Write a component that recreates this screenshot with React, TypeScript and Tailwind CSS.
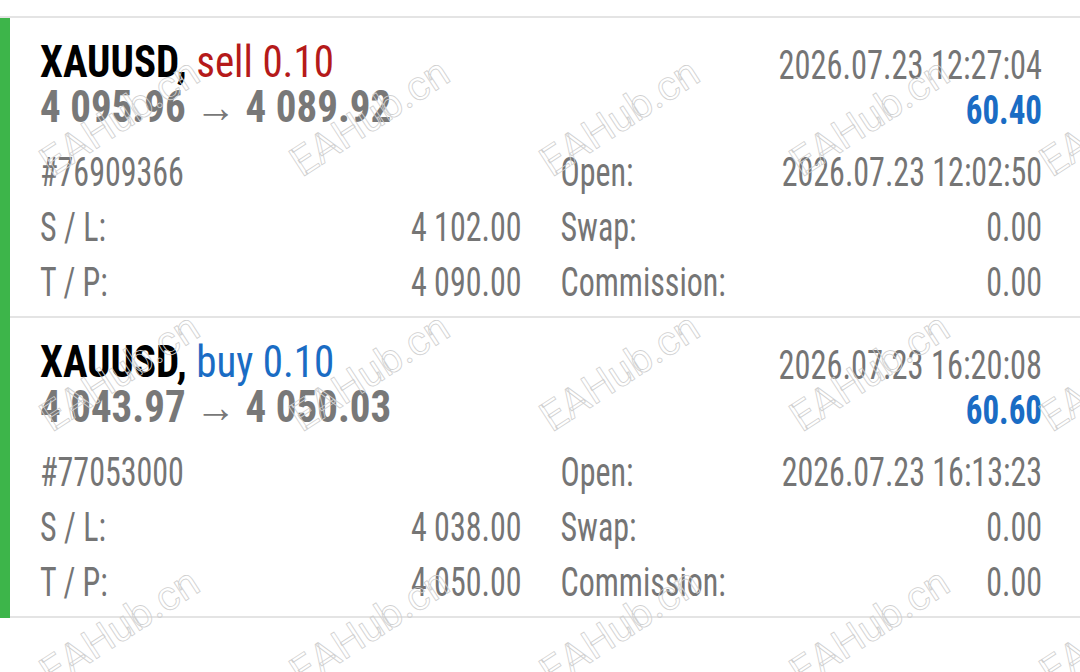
import React from "react";

type Trade = {
  symbol: string;
  side: "buy" | "sell";
  lots: string;
  openPrice: string;
  closePrice: string;
  closeTime: string;
  profit: string;
  ticket: string;
  openTime: string;
  sl: string;
  tp: string;
  swap: string;
  commission: string;
};

const trades: Trade[] = [
  {
    symbol: "XAUUSD",
    side: "sell",
    lots: "0.10",
    openPrice: "4 095.96",
    closePrice: "4 089.92",
    closeTime: "2026.07.23 12:27:04",
    profit: "60.40",
    ticket: "#76909366",
    openTime: "2026.07.23 12:02:50",
    sl: "4 102.00",
    tp: "4 090.00",
    swap: "0.00",
    commission: "0.00",
  },
  {
    symbol: "XAUUSD",
    side: "buy",
    lots: "0.10",
    openPrice: "4 043.97",
    closePrice: "4 050.03",
    closeTime: "2026.07.23 16:20:08",
    profit: "60.60",
    ticket: "#77053000",
    openTime: "2026.07.23 16:13:23",
    sl: "4 038.00",
    tp: "4 050.00",
    swap: "0.00",
    commission: "0.00",
  },
];

// Narrow, tall numerals like the terminal's condensed face
const tall = "scale-y-[1.25]";

function Field({ label, value }: { label: string; value: string }) {
  return (
    <div className="flex h-[55px] items-baseline justify-between leading-[55px]">
      <span className={tall}>{label}</span>
      <span className={tall}>{value}</span>
    </div>
  );
}

function TradeCard({ t }: { t: Trade }) {
  return (
    <div className="border-b-2 border-[#e4e4e4] pb-[6px] pl-[30px] pr-[38px] pt-[22px]">
      <div className="flex h-[45px] items-baseline justify-between leading-[45px]">
        <div className="scale-y-[1.1] text-[41px]">
          <span className="font-bold text-black">{t.symbol},</span>{" "}
          <span className={t.side === "sell" ? "text-[#b51a1a]" : "text-[#1a6cc4]"}>
            {t.side} {t.lots}
          </span>
        </div>
        <span className={`${tall} text-[32.4px] text-[#757575]`}>{t.closeTime}</span>
      </div>
      <div className="flex h-[45px] items-baseline justify-between leading-[45px]">
        <div className="scale-y-[1.07] text-[41px] font-bold text-[#787878]">
          {t.openPrice} <span className="font-normal">→</span> {t.closePrice}
        </div>
        <span className={`${tall} text-[33px] font-bold text-[#1a6cc4]`}>{t.profit}</span>
      </div>
      <div className="mt-[15px] grid grid-cols-2 gap-x-[39px] text-[32px] text-[#757575]">
        <div>
          <div className="flex h-[55px] items-baseline leading-[55px]">
            <span className={tall}>{t.ticket}</span>
          </div>
          <Field label="S / L:" value={t.sl} />
          <Field label="T / P:" value={t.tp} />
        </div>
        <div>
          <Field label="Open:" value={t.openTime} />
          <Field label="Swap:" value={t.swap} />
          <Field label="Commission:" value={t.commission} />
        </div>
      </div>
    </div>
  );
}

function Watermark() {
  const cells = Array.from({ length: 15 });
  return (
    <div className="pointer-events-none absolute left-[-5px] top-[-10px] grid auto-rows-[255px] grid-cols-[repeat(5,250px)]">
      {cells.map((_, i) => (
        <div key={i} className="flex items-center justify-center">
          <span className="rotate-[-33deg] whitespace-nowrap font-['Roboto',sans-serif] text-[41px] text-transparent [-webkit-text-stroke:0.8px_#d0d0d0]">
            EAHub.cn
          </span>
        </div>
      ))}
    </div>
  );
}

export default function App() {
  return (
    <div className="relative h-[672px] w-[1080px] overflow-hidden bg-white font-['Roboto_Condensed','Roboto',sans-serif]">
      <div className="pt-4">
        <div className="h-[2px] bg-[#e4e4e4]" />
        <div className="border-l-[10px] border-[#3db54a]">
          {trades.map((t) => (
            <TradeCard key={t.ticket} t={t} />
          ))}
        </div>
      </div>
      <Watermark />
    </div>
  );
}
